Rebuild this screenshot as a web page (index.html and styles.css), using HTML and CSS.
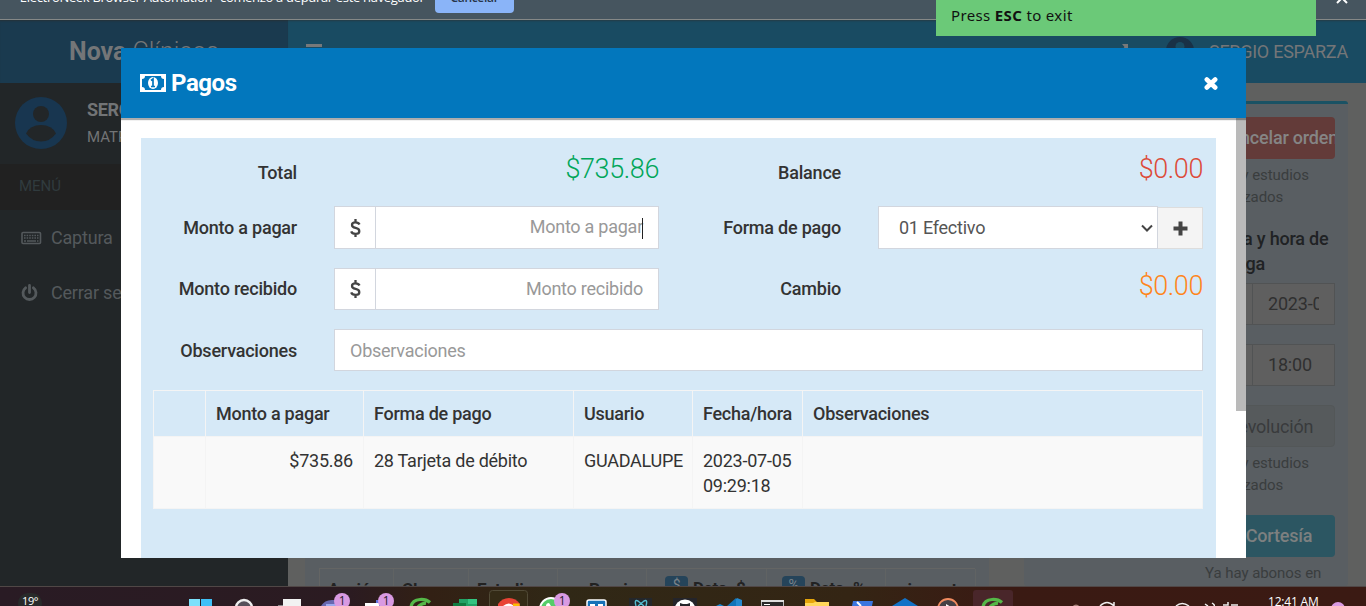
FILE: index.html
```html
<!DOCTYPE html>
<html lang="es">
<head>
<meta charset="utf-8">
<title>Nova Clínicos - Pagos</title>
<link rel="stylesheet" href="styles.css">
</head>
<body>
<div class="screen">
  <div class="infobar">
    <span class="infobar-text">"ElectroNeek Browser Automation" comenzó a depurar este navegador</span>
    <span class="infobar-button">Cancelar</span>
    <svg class="infobar-close" width="12" height="12" viewBox="0 0 12 12"><path d="M1 1l10 10M11 1L1 11" stroke="#fff" stroke-width="2"/></svg>
  </div>

  <div class="app">
    <aside class="sidebar">
      <div class="brand"><b>Nova</b> Clínicos</div>
      <div class="user">
        <svg width="52" height="52" viewBox="0 0 52 52"><circle cx="26" cy="26" r="26" fill="#183650"/><circle cx="26" cy="17" r="8" fill="#222628"/><path d="M11 36.500Q15 28 26 28T41 36.500Q35 44.500 26 44.500T11 36.500z" fill="#222628"/></svg>
        <div class="user-text"><b>SERGIO</b><span>MATRIZ</span></div>
      </div>
      <div class="menu-title">MENÚ</div>
      <div class="menu-item">
        <svg width="21" height="16" viewBox="0 0 21 16"><rect x="1" y="2.500" width="18.500" height="11" rx="1" fill="none" stroke="#54595c" stroke-width="1.600"/><path d="M3 5.500h14.500M3 8h14.500" stroke="#54595c" stroke-width="1.500" stroke-dasharray="1.600 1"/><path d="M3 11h2m1 0h9m1 0h1.500" stroke="#54595c" stroke-width="1.500"/></svg>
        <span>Captura</span>
      </div>
      <div class="menu-item">
        <svg width="21" height="18" viewBox="0 0 21 18"><path d="M4.600 3.800a6.500 6.500 0 1 0 7.800 0M8.500 1.500v7" fill="none" stroke="#54595c" stroke-width="2.800" stroke-linecap="round"/></svg>
        <span>Cerrar sesión</span>
      </div>
    </aside>

    <div class="main">
      <header class="navbar">
        <svg width="16" height="15" viewBox="0 0 16 15"><path d="M0 1.500h16M0 7.500h16M0 13.500h16" stroke="#77797a" stroke-width="3"/></svg>
        <div class="nav-user">
          <svg class="nav-expand" width="8" height="16" viewBox="0 0 8 16"><path d="M1 0h6v6L5 4 1 8 0 7l3.500-4z" fill="#77797a"/></svg>
          <svg width="28" height="28" viewBox="0 0 28 28"><circle cx="14" cy="14" r="14" fill="#193146"/><circle cx="14" cy="9.500" r="4.500" fill="#194b62"/><path d="M6 20q2-5 8-5t8 5q-8 8-16 0z" fill="#194b62"/></svg>
          <span>SERGIO ESPARZA</span>
        </div>
      </header>
      <div class="content">
        <section class="studies">
          <div class="studies-head">
            <span>Acción</span><span>Clave</span><span>Estudio</span><span class="right">Precio</span>
            <span class="discount"><i class="chip">$</i>Dcto. $</span>
            <span class="discount"><i class="chip">%</i>Dcto. %</span>
            <span class="right">importe</span>
          </div>
        </section>
        <section class="actions">
          <div class="action danger">Cancelar orden</div>
          <p class="hint">Ya hay estudios autorizados</p>
          <p class="date-label">Fecha y hora de entrega</p>
          <div class="date-field"><span class="addon"></span><span class="date-value"><span>2023-07-05</span></span></div>
          <div class="date-field"><span class="addon"></span><span class="date-value"><span>18:00</span></span></div>
          <div class="action muted">Devolución</div>
          <p class="hint second">Ya hay estudios autorizados</p>
          <div class="action info">Cortesía</div>
          <p class="hint last">Ya hay abonos en</p>
        </section>
      </div>
    </div>
  </div>

  <footer class="taskbar">
    <div class="weather">19°</div>
    <div class="tasks">
      <svg viewBox="0 0 44 20"><path d="M11 13h11v7H11z" fill="#7be1fb"/><path d="M23 13h11v7H23z" fill="#3fc0f6"/></svg>
      <svg viewBox="0 0 44 20"><circle cx="22" cy="22" r="8" fill="#55505a" stroke="#eee" stroke-width="2.400"/></svg>
      <svg viewBox="0 0 44 20"><path d="M12 19h12v1H12z" fill="#888"/><path d="M17 13h18v7H17z" fill="#f2f2f2"/></svg>
      <div class="task"><svg viewBox="0 0 44 20"><path d="M11 20q4-7 13-6l6 6z" fill="#6868b0"/><path d="M16 18h12v2H16z" fill="#9ba9ef"/></svg><span class="badge">1</span></div>
      <div class="task"><svg viewBox="0 0 44 20"><path d="M22 14h10v6H22z" fill="#6574df"/><path d="M11 17h14v3H11z" fill="#fff"/></svg><span class="badge">1</span></div>
      <svg viewBox="0 0 44 20"><path d="M13 21q1-7 9-7.500 6-.5 10 3M20 21q4-4 8-3.500" fill="none" stroke="#55b848" stroke-width="3.200"/></svg>
      <svg viewBox="0 0 44 20"><path d="M17 13h18v7H17z" fill="#21a366"/><path d="M26 13h9v5h-9z" fill="#33c481"/><path d="M11 17h13v3H11z" fill="#107c41"/></svg>
      <svg viewBox="0 0 44 20"><rect x="3.500" y="4.500" width="38" height="22" rx="3" fill="#342b16" stroke="#514a36"/><path d="M12 18q4-6 11-6t11 6v2H12z" fill="#e94335"/><path d="M17 20q6-5 11 0z" fill="#fff"/><path d="M27 17.500h6.500v2.500H27z" fill="#fbbc04"/></svg>
      <div class="task"><svg viewBox="0 0 44 20"><circle cx="21" cy="23" r="11" fill="#55cd68" stroke="#fff" stroke-width="2"/><path d="M16 20q0-3 3-3l2 3z" fill="#fff"/></svg><span class="badge">1</span></div>
      <svg viewBox="0 0 44 20"><rect x="13" y="14" width="19" height="16" rx="2" fill="#1672b8" stroke="#fff" stroke-width="1.500"/><path d="M16 18h5v2h-5zM24 18h5v2h-5z" fill="#fff"/></svg>
      <svg viewBox="0 0 44 20"><path d="M11 12h23v8H11z" fill="#24272b"/><path d="M18 20q-2-7 2-5l6 5M28 20q2-7-2-5l-6 5" fill="none" stroke="#54bcd0" stroke-width="1.400"/></svg>
      <svg viewBox="0 0 44 20"><path d="M11 12h24v8H11z" fill="#24242a"/><circle cx="23" cy="24" r="10.500" fill="#fff"/><path d="M18 20v-3l3 1h4l3-1v3z" fill="#24242a"/></svg>
      <svg viewBox="0 0 44 20"><path d="M23 20l8-8 5 2v6z" fill="#2489ce"/><path d="M10 20l4-2 4 2z" fill="#1686d0"/><path d="M21 20l9-8v8z" fill="#1174b9"/></svg>
      <svg viewBox="0 0 44 20"><path d="M11.500 14.500h22V21h-22z" fill="#292929" stroke="#bbb"/><path d="M11 14h23v2H11z" fill="#ddd"/><path d="M14 18.500h6" stroke="#fff"/></svg>
      <svg viewBox="0 0 44 20"><path d="M11 13h9l3 3h12v4H11z" fill="#e5a50a"/><path d="M11 17h8l2-1h14v4H11z" fill="#ffd75a"/></svg>
      <svg viewBox="0 0 44 20"><path d="M15 15h20l-1 5H14z" fill="#3b76df"/><path d="M19 16l4 4" stroke="#fff" stroke-width="2"/></svg>
      <svg viewBox="0 0 44 20"><path d="M10 20l13-8 13 8z" fill="#1272c7"/></svg>
      <svg viewBox="0 0 44 20"><circle cx="22" cy="23" r="10" fill="#454045" stroke="#f28c60" stroke-width="1.800"/><path d="M20 18l5 3h-5z" fill="#fff"/></svg>
      <svg viewBox="0 0 44 20"><rect x="3" y="4" width="40" height="22" rx="3" fill="#49262a"/><path d="M13 21q1-7 9-7.500 6-.5 10 3M20 21q4-4 8-3.500" fill="none" stroke="#55b848" stroke-width="3.200"/></svg>
    </div>
    <svg class="tray" viewBox="0 0 200 20"><g fill="none" stroke="#eee" stroke-width="1.500"><path d="M46 20q7-7 14 0M60 16v4M122 20q6-5 13 0M151 18l3 2M158 17q3 2 2 3M169 19h5v-3M177 19h7"/></g><circle cx="22" cy="22" r="3.500" fill="#a8827a"/></svg>
    <span class="clock">12:41 AM</span>
    <span class="bell"></span>
  </footer>

  <div class="modal">
    <header class="modal-header">
      <svg width="26" height="18" viewBox="0 0 26 18"><path d="M0 0h26v18H0z" fill="#fff"/><path d="M5 2h16q0 3 3 3v8q-3 0-3 3H5q0-3-3-3V5q3 0 3-3z" fill="#0277bd"/><ellipse cx="13" cy="9" rx="5" ry="6" fill="#fff"/><path d="M11 6.500l2-1.500v7M11 12.500h4" fill="none" stroke="#0277bd" stroke-width="1.700"/></svg>
      <span class="modal-title">Pagos</span>
      <svg class="modal-close" width="14" height="13" viewBox="0 0 14 13"><path d="M2.800 2.500l8.400 8M11.200 2.500l-8.400 8" stroke="#fff" stroke-width="4.600" stroke-linecap="round"/></svg>
    </header>
    <div class="modal-body">
      <div class="payment">
        <div class="form">
          <label>Total</label><div class="amount green">$735.86</div>
          <label>Balance</label><div class="amount red">$0.00</div>

          <label>Monto a pagar</label>
          <div class="field money"><svg class="dollar" viewBox="0 0 11 18"><path d="M9.500 5.500Q8.500 3.300 5.500 3.300 2 3.300 2 5.900 2 8.100 5.500 8.900 9.300 9.700 9.300 12.200 9.300 14.900 5.500 14.900 2 14.900 1.200 12.400M5.500 0v3M5.500 15v3" fill="none" stroke="#444" stroke-width="2.300"/></svg><span class="placeholder">Monto a pagar<i class="caret"></i></span></div>
          <label>Forma de pago</label>
          <div class="select-group">
            <div class="field select"><span>01 Efectivo</span><svg width="12" height="8" viewBox="0 0 12 8"><path d="M1 1.500l5 5 5-5" fill="none" stroke="#444" stroke-width="2"/></svg></div>
            <div class="add"><svg width="15" height="15" viewBox="0 0 15 15"><path d="M7.500 .5v14M.5 7.500h14" stroke="#444" stroke-width="4" /></svg></div>
          </div>

          <label>Monto recibido</label>
          <div class="field money"><svg class="dollar" viewBox="0 0 11 18"><path d="M9.500 5.500Q8.500 3.300 5.500 3.300 2 3.300 2 5.900 2 8.100 5.500 8.900 9.300 9.700 9.300 12.200 9.300 14.900 5.500 14.900 2 14.900 1.200 12.400M5.500 0v3M5.500 15v3" fill="none" stroke="#444" stroke-width="2.300"/></svg><span class="placeholder">Monto recibido</span></div>
          <label>Cambio</label><div class="amount orange">$0.00</div>

          <label class="notes-label">Observaciones</label><div class="field wide">Observaciones</div>
        </div>
        <table class="payments">
          <colgroup><col class="c1"><col class="c2"><col class="c3"><col class="c4"><col class="c5"><col></colgroup>
          <thead><tr><th></th><th>Monto a pagar</th><th>Forma de pago</th><th>Usuario</th><th>Fecha/hora</th><th>Observaciones</th></tr></thead>
          <tbody><tr><td></td><td class="num">$735.86</td><td>28 Tarjeta de débito</td><td>GUADALUPE</td><td><span class="nowrap">2023-07-05</span> 09:29:18</td><td></td></tr></tbody>
        </table>
      </div>
      <div class="scroll"><div class="thumb"></div></div>
    </div>
  </div>

  <div class="toast">Press <b>ESC</b> to exit</div>
</div>
</body>
</html>
```

FILE: styles.css
```css
* { box-sizing: border-box; }
body { margin: 0; font-family: Roboto, "Liberation Sans", sans-serif; font-size: 18px; line-height: 25px; color: #333; letter-spacing: -.2px; }
svg { display: block; flex: none; }
i { font-style: normal; }
p { margin: 0; }
.screen { position: relative; width: 1366px; height: 606px; overflow: hidden; display: flex; flex-direction: column; }
.nowrap { white-space: nowrap; }

.infobar { height: 20px; flex: none; display: flex; align-items: flex-start; background: #46555f; border-bottom: 1px solid #858887; padding: 0 18px 0 15px; overflow: hidden; font-family: "Open Sans", sans-serif; font-size: 13px; line-height: 18px; color: #fff; letter-spacing: -.32px; }
.infobar-text { width: 420px; margin-top: -12px; white-space: nowrap; }
.infobar-button { width: 79px; height: 26px; margin-top: -13px; border-radius: 4px; background: #8ab4f8; color: #273449; font-size: 12px; font-weight: 600; line-height: 22px; text-align: center; }
.infobar-close { margin: -8px 0 0 auto; }

.app { flex: 1; min-height: 0; display: flex; overflow: hidden; }
.sidebar { width: 288px; flex: none; background: #222628; }
.brand { height: 63px; padding: 19px 0 0 69px; background: #1a3a4f; color: #747678; font-size: 25px; font-weight: 300; letter-spacing: 0; box-shadow: inset 0 2px 2px -1px #263238; white-space: nowrap; }
.brand b { font-weight: 700; }
.user { height: 81px; display: flex; gap: 20px; padding: 14px 0 0 15px; }
.user-text { display: flex; flex-direction: column; gap: 4px; color: #727476; padding-top: 1px; }
.user-text b { font-weight: 700; line-height: 23px; letter-spacing: -.3px; }
.user-text span { font-size: 15px; font-weight: 400; letter-spacing: 0; }
.menu-title { height: 46px; padding: 10px 19px; background: #212121; color: #303b3e; font-size: 15px; letter-spacing: 0; }
.menu-item { height: 55px; display: flex; align-items: center; gap: 9px; padding-left: 21px; color: #54595c; }

.main { flex: 1; min-width: 0; display: flex; flex-direction: column; background: #5f605f; }
.navbar { height: 63px; flex: none; display: flex; justify-content: space-between; background: #194b62; color: #747678; padding: 24px 18px 0 18px; box-shadow: inset 0 2px 2px -1px #263c44; }
.nav-user { display: flex; align-items: center; height: 28px; margin-top: -7px; font-size: 18px; letter-spacing: -.25px; }
.nav-user span { margin: 1px 0 0 15px; }
.nav-expand { align-self: flex-start; margin: 7px 37px 0 0; }
.content { flex: 1; min-height: 0; display: flex; justify-content: space-between; padding: 18px 18px 0 17px; }
.studies { width: 684px; background: #595e62; padding: 467px 14px 0; }
.studies-head { display: grid; grid-template-columns: 74px 75px 89px 89px 120px 119px 90px; border: 1px solid #646564; border-width: 1px 0 0 1px; color: #222; font-weight: 700; height: 50px; font-size: 17px; white-space: nowrap; }
.studies-head > span { padding: 8px 8px; border-right: 1px solid #606363; }
.studies-head > .right { text-align: right; padding-right: 9px; }
.studies-head > .discount { display: flex; gap: 5px; padding: 7px 0 0 18px; }
.studies-head > .discount + .discount { padding-left: 15px; }
.chip { width: 23px; height: 25px; border-radius: 4px; background: #25445a; color: #7b8389; text-align: center; font-size: 14px; line-height: 19px; font-weight: 400; }
.actions { width: 324px; background: #595e62; border-top: 3px solid #1a5264; border-radius: 3px; padding: 13px 13px 0 181px; }
.action { height: 42px; border-radius: 4px; line-height: 42px; text-align: center; white-space: nowrap; overflow: hidden; }
.danger { background: #633b39; color: #858585; font-weight: 500; padding-left: 14px; }
.hint { height: 43px; margin-top: 5px; font-size: 15px; line-height: 22px; color: #3a3d3e; letter-spacing: -.05px; }
.date-label { height: 50px; margin: 19px 0 7px; color: #202224; font-weight: 500; line-height: 25px; margin-right: -8px; }
.date-field { height: 42px; display: flex; border: 1px solid #515354; background: #5f5f5f; margin-bottom: 19px; }
.addon { width: 47px; border-right: 1px solid #515354; }
.date-value { flex: 1; min-width: 0; padding: 0 15px; color: #303030; line-height: 40px; }
.date-value span { display: block; overflow: hidden; white-space: nowrap; }
.muted { background: #565a5c; border: 1px solid #535758; color: #393b3c; line-height: 42px; }
.second { margin-bottom: 20px; }
.info { background: #2c5662; color: #7d8080; font-weight: 500; padding-left: 18px; }
.last { white-space: nowrap; }

.taskbar { height: 20px; flex: none; display: flex; overflow: hidden; border-top: 1px solid #504746; background: linear-gradient(90deg, #291b24 0, #2b1b21 350px, #322014 430px, #302816 560px, #342514 850px, #3a1a13 1000px, #3b1a13 100%); color: #fff; font-family: "Open Sans", sans-serif; font-size: 12px; line-height: 14px; }
.weather { width: 24px; height: 20px; margin: 6px 136px 0 18px; border-radius: 10px; background: #282a2a; text-align: center; font-size: 11px; line-height: 16px; letter-spacing: -.5px; }
.tasks { display: flex; margin-top: -1px; }
.tasks svg { width: 44px; height: 20px; }
.task { position: relative; width: 44px; }
.badge { position: absolute; left: 24px; top: 7px; width: 16px; height: 16px; border-radius: 8px; background: #d99ae2; color: #2b1b2b; line-height: 16px; font-size: 12px; text-align: center; }
.tray { width: 200px; height: 20px; margin: -1px 0 0 40px; }
.clock { width: 52px; margin: 8px 0 0 14px; white-space: nowrap; letter-spacing: -.2px; }
.bell { width: 14px; height: 14px; border-radius: 7px; background: #d99ae2; margin: 15px 0 0 11px; }

.modal { position: absolute; left: 121px; top: 48px; width: 1125px; height: 510px; overflow: hidden; display: flex; flex-direction: column; background: #fff; }
.modal-header { height: 70px; flex: none; display: flex; align-items: center; gap: 5px; padding: 0 28px 0 19px; background: #0277bd; color: #fff; box-shadow: 0 2px 1px rgba(0, 0, 0, .32); position: relative; }
.modal-title { font-size: 24px; font-weight: 700; letter-spacing: -.45px; }
.modal-close { margin-left: auto; }
.modal-body { flex: 1; min-height: 0; display: flex; }
.payment { width: 1075px; margin: 20px 20px 0; background: #d6e9f7; padding: 0 13px 0 12px; }
.form { display: grid; grid-template-columns: 181px 325px 219px 325px; grid-template-rows: 68px 43px 61px 61px; }
.form label { font-weight: 500; text-align: right; padding-right: 37px; align-self: end; height: 34px; line-height: 26px; letter-spacing: -.22px; }
.form label:nth-of-type(1), .form label:nth-of-type(2) { height: 46px; }
.form .notes-label { height: 33px; }
.amount { text-align: right; font-size: 27px; font-weight: 300; line-height: 63px; letter-spacing: -.4px; }
.green { color: #00a65a; }
.red { color: #dd4b39; }
.orange { color: #ff851b; line-height: 74px; }
.field { height: 42px; align-self: end; border: 1px solid #d2d6de; background: #fff; display: flex; align-items: center; color: #999; letter-spacing: -.25px; }
.form > .field:nth-of-type(3), .select-group, .select { height: 43px; }
.money { padding: 0 15px; }
.dollar { width: 11px; height: 18px; }
.placeholder { margin-left: 14px; border-left: 1px solid #d2d6de; flex: 1; align-self: stretch; line-height: 40px; text-align: right; }
.caret { display: inline-block; width: 1px; height: 21px; margin-left: -1px; background: #222; vertical-align: middle; }
.select-group { display: flex; align-items: flex-end; }
.select { width: 280px; justify-content: space-between; padding: 0 4px 0 20px; color: #555; }
.add { width: 45px; height: 42px; border: 1px solid #ddd; border-left: 0; background: #f4f4f4; display: grid; place-items: center; }
.wide { grid-column: 2 / 5; padding: 0 15px; }
.payments { width: 1050px; margin-top: 19px; table-layout: fixed; border-collapse: collapse; letter-spacing: -.25px; }
.payments th, .payments td { border: 1px solid #f4f4f4; padding: 10px; text-align: left; vertical-align: top; }
.payments th { height: 46px; font-weight: 500; }
.payments td { height: 72px; padding-top: 11px; background: #f9f9f9; }
.payments .num { text-align: right; }
.c1 { width: 52px; } .c2 { width: 158px; } .c3 { width: 210px; } .c4 { width: 119px; } .c5 { width: 110px; }
.scroll { width: 10px; }
.thumb { height: 293px; background: #bababa; }

.toast { position: absolute; left: 936px; top: 0; width: 380px; height: 36px; padding: 3px 15px; background: #6bc978; color: #111; font-family: "Noto Sans", sans-serif; font-size: 15px; line-height: 24px; letter-spacing: .35px; }
```
